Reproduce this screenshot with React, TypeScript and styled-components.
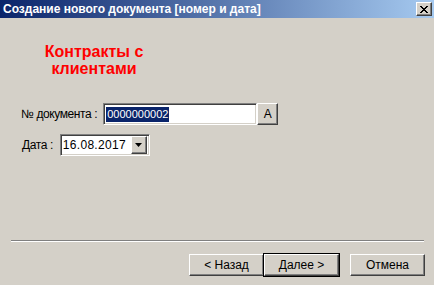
import React from "react";
import styled, { createGlobalStyle, css } from "styled-components";

const GlobalStyle = createGlobalStyle`
  html, body {
    margin: 0;
    padding: 0;
    background: #d4d0c8;
  }
  body {
    font-family: "Liberation Sans", Arial, sans-serif;
    font-size: 12px;
    color: #000;
  }
`;

const raised = css`
  border: 1px solid;
  border-color: #fff #404040 #404040 #fff;
  box-shadow: inset -1px -1px #808080, inset 1px 1px #d4d0c8;
  background: #d4d0c8;
`;

const sunken = css`
  border: 1px solid;
  border-color: #808080 #fff #fff #808080;
  box-shadow: inset 1px 1px #404040, inset -1px -1px #d4d0c8;
  background: #fff;
`;

const Window = styled.div`
  width: 434px;
  height: 285px;
  display: flex;
  flex-direction: column;
  background: #d4d0c8;
  overflow: hidden;
`;

const TitleBar = styled.div`
  height: 18px;
  flex: none;
  display: flex;
  align-items: center;
  justify-content: space-between;
  padding: 0 2px 0 3px;
  background: linear-gradient(to right, #0a246a, #a6caf0);
`;

const TitleText = styled.span`
  color: #fff;
  font-weight: bold;
  font-size: 12px;
  white-space: nowrap;
`;

const CloseButton = styled.div`
  ${raised};
  box-sizing: border-box;
  width: 16px;
  height: 14px;
  display: flex;
  align-items: center;
  justify-content: center;
`;

const Body = styled.div`
  flex: 1;
  display: flex;
  flex-direction: column;
  padding: 0 10px 0 11px;
`;

const Heading = styled.div`
  width: 166px;
  margin-top: 25px;
  color: #ff0000;
  font-weight: bold;
  font-size: 16px;
  line-height: 17px;
  text-align: center;
`;

const Form = styled.div`
  display: flex;
  flex-direction: column;
  gap: 9px;
  margin-top: 26px;
`;

const Row = styled.div<{ $indent: number; $gap: number }>`
  display: flex;
  align-items: center;
  height: 22px;
  padding-left: ${(p) => p.$indent}px;
  gap: ${(p) => p.$gap}px;
`;

const Label = styled.span`
  white-space: nowrap;
  letter-spacing: -0.4px;
`;

const TextField = styled.div`
  ${sunken};
  box-sizing: border-box;
  width: 154px;
  height: 22px;
  display: flex;
  align-items: center;
  padding-left: 2px;
`;

const Selected = styled.span`
  background: #0a246a;
  color: #fff;
  font-size: 11px;
  line-height: 15px;
  padding: 0 1px;
`;

const SmallButton = styled.div`
  ${raised};
  box-sizing: border-box;
  width: 21px;
  height: 22px;
  margin-left: -6px;
  display: flex;
  align-items: center;
  justify-content: center;
  font-size: 12px;
`;

const DateField = styled.div`
  ${sunken};
  box-sizing: border-box;
  width: 90px;
  height: 22px;
  display: flex;
  align-items: center;
  justify-content: space-between;
  padding: 0 2px 0 2px;
`;

const DateText = styled.span`
  letter-spacing: 0.3px;
`;

const DropButton = styled.div`
  ${raised};
  box-sizing: border-box;
  width: 16px;
  height: 18px;
  display: flex;
  align-items: center;
  justify-content: center;
`;

const Spacer = styled.div`
  flex: 1;
`;

const Separator = styled.div`
  height: 0;
  border-top: 1px solid #808080;
  border-bottom: 1px solid #fff;
`;

const ButtonBar = styled.div`
  display: flex;
  justify-content: flex-end;
  margin: 12px -1px 9px 0;
`;

const DialogButton = styled.div<{ $default?: boolean; $gapLeft?: number }>`
  ${raised};
  box-sizing: border-box;
  width: 75px;
  height: 22px;
  display: flex;
  align-items: center;
  justify-content: center;
  margin-left: ${(p) => p.$gapLeft ?? 0}px;
  ${(p) =>
    p.$default &&
    css`
      outline: 1px solid #000;
      outline-offset: 0;
    `}
`;

export default function App() {
  return (
    <>
      <GlobalStyle />
      <Window>
        <TitleBar>
          <TitleText>Создание нового документа [номер и дата]</TitleText>
          <CloseButton>
            <svg width="8" height="7" viewBox="0 0 8 7">
              <path d="M0 0 L7 7 M1 0 L8 7 M7 0 L0 7 M8 0 L1 7" stroke="#000" strokeWidth="1" />
            </svg>
          </CloseButton>
        </TitleBar>
        <Body>
          <Heading>
            Контракты с
            <br />
            клиентами
          </Heading>
          <Form>
            <Row $indent={10} $gap={6}>
              <Label>№ документа :</Label>
              <TextField>
                <Selected>0000000002</Selected>
              </TextField>
              <SmallButton>A</SmallButton>
            </Row>
            <Row $indent={11} $gap={7}>
              <Label>Дата :</Label>
              <DateField>
                <DateText>16.08.2017</DateText>
                <DropButton>
                  <svg width="7" height="4" viewBox="0 0 7 4">
                    <path d="M0 0 H7 L3.5 4 Z" fill="#000" />
                  </svg>
                </DropButton>
              </DateField>
            </Row>
          </Form>
          <Spacer />
          <Separator />
          <ButtonBar>
            <DialogButton>&lt; Назад</DialogButton>
            <DialogButton $default>Далее &gt;</DialogButton>
            <DialogButton $gapLeft={11}>Отмена</DialogButton>
          </ButtonBar>
        </Body>
      </Window>
    </>
  );
}
